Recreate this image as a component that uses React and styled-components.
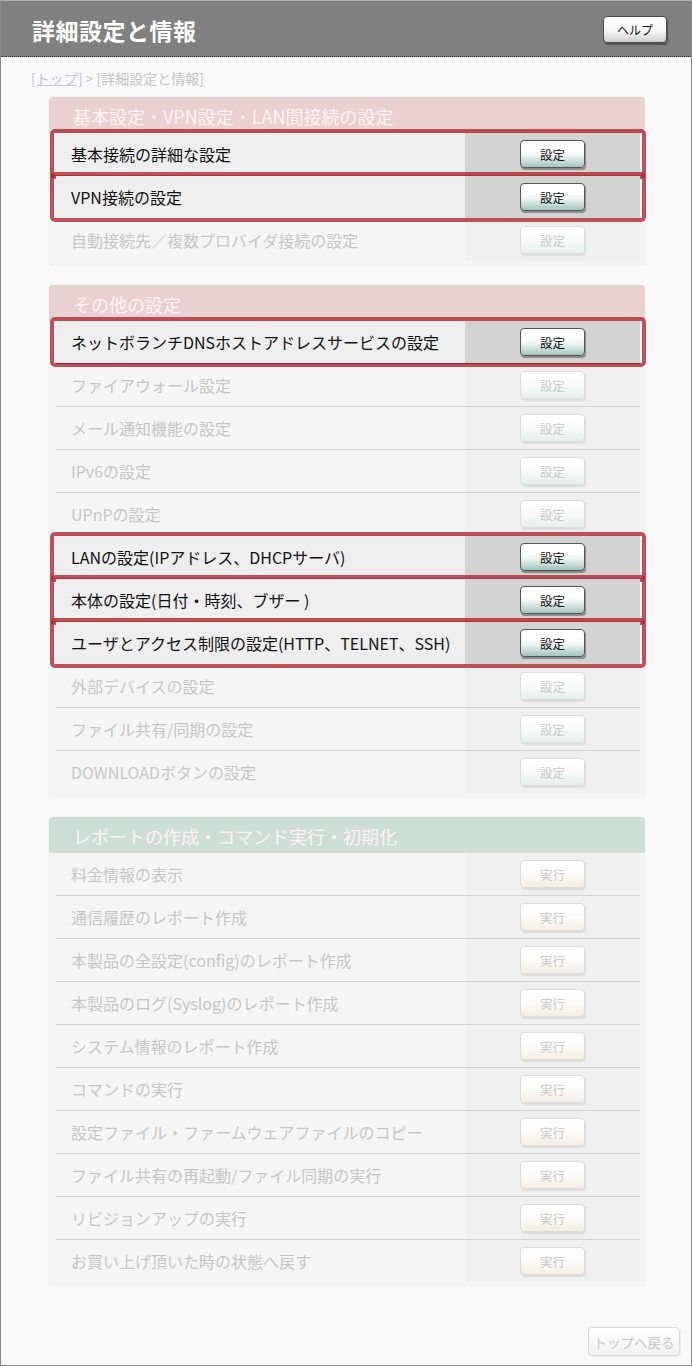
import React from 'react'
import styled, { createGlobalStyle, css } from 'styled-components'

const GlobalStyle = createGlobalStyle`
    html, body{
        margin: 0;
        padding: 0;
        background: #f9f9f9;
    }
    body{
        font-family: "Noto Sans CJK JP", "Noto Sans", sans-serif;
    }
    *{
        box-sizing: border-box;
    }
`

const sections = [
    {
        title: '基本設定・VPN設定・LAN間接続の設定',
        tone: 'pink',
        action: '設定',
        rows: [
            { label: '基本接続の詳細な設定', active: true },
            { label: 'VPN接続の設定', active: true },
            { label: '自動接続先／複数プロバイダ接続の設定' },
        ],
    },
    {
        title: 'その他の設定',
        tone: 'pink',
        action: '設定',
        rows: [
            { label: 'ネットボランチDNSホストアドレスサービスの設定', active: true, line: true },
            { label: 'ファイアウォール設定' },
            { label: 'メール通知機能の設定' },
            { label: 'IPv6の設定' },
            { label: 'UPnPの設定' },
            { label: 'LANの設定(IPアドレス、DHCPサーバ)', active: true },
            { label: '本体の設定(日付・時刻、ブザー )', active: true },
            { label: 'ユーザとアクセス制限の設定(HTTP、TELNET、SSH)', active: true },
            { label: '外部デバイスの設定' },
            { label: 'ファイル共有/同期の設定' },
            { label: 'DOWNLOADボタンの設定' },
        ],
    },
    {
        title: 'レポートの作成・コマンド実行・初期化',
        tone: 'green',
        action: '実行',
        rows: [
            { label: '料金情報の表示' },
            { label: '通信履歴のレポート作成' },
            { label: '本製品の全設定(config)のレポート作成' },
            { label: '本製品のログ(Syslog)のレポート作成' },
            { label: 'システム情報のレポート作成' },
            { label: 'コマンドの実行' },
            { label: '設定ファイル・ファームウェアファイルのコピー' },
            { label: 'ファイル共有の再起動/ファイル同期の実行' },
            { label: 'リビジョンアップの実行' },
            { label: 'お買い上げ頂いた時の状態へ戻す' },
        ],
    },
]

function App() {
    return (
        <>
            <GlobalStyle />
            <Frame>
                <TitleBar>
                    <Title>詳細設定と情報</Title>
                    <HelpButton>ヘルプ</HelpButton>
                </TitleBar>
                <Breadcrumb>
                    <a>[トップ]</a> &gt; [詳細設定と情報]
                </Breadcrumb>
                <Content>
                    {sections.map((section) => (
                        <Panel key={section.title}>
                            <PanelHeader $tone={section.tone}>{section.title}</PanelHeader>
                            {section.rows.map((row, index) => (
                                <Row
                                    key={row.label}
                                    $active={row.active}
                                    $line={row.line}
                                    $last={index === section.rows.length - 1}
                                >
                                    <Label>{row.label}</Label>
                                    <Cell $active={row.active}>
                                        <ActionButton $active={row.active} $kind={section.action === '実行' ? 'run' : 'set'}>
                                            {section.action}
                                        </ActionButton>
                                    </Cell>
                                </Row>
                            ))}
                        </Panel>
                    ))}
                </Content>
                <Footer>
                    <BackButton>トップへ戻る</BackButton>
                </Footer>
            </Frame>
        </>
    )
}

const Frame = styled.div`
    width: 692px;
    height: 1366px;
    border: 1px solid #8a8a8a;
    border-top-color: #b0b0b0;
    background: #f9f9f9;
    display: flex;
    flex-direction: column;
`

const TitleBar = styled.div`
    height: 56px;
    flex-shrink: 0;
    display: flex;
    align-items: center;
    justify-content: space-between;
    padding: 2px 24px 0 31px;
    background: #808080;
    border-bottom: 1px dotted #333;
`

const Title = styled.h1`
    margin: 0;
    color: #fff;
    font-size: 23px;
    font-weight: 700;
    letter-spacing: 0.5px;
`

const HelpButton = styled.button`
    width: 64px;
    height: 27px;
    padding: 0;
    font-family: inherit;
    font-size: 12px;
    color: #111;
    border: 1px solid #4a4a4a;
    border-radius: 4px;
    background: linear-gradient(#ffffff 0%, #f7f7f7 55%, #cfcfcf 100%);
    box-shadow: 1px 2px 1px rgba(0,0,0,0.35);
`

const Breadcrumb = styled.div`
    padding: 11px 0 0 30px;
    height: 40px;
    font-size: 14px;
    color: #c4c4c4;
    a{
        color: #c8bedd;
        text-decoration: underline;
    }
`

const Content = styled.div`
    display: flex;
    flex-direction: column;
    gap: 20px;
    padding: 0 46px 0 48px;
`

const Panel = styled.div`
    background: #f4f4f4;
    border-radius: 4px;
    padding: 0 5px 3px 7px;
    box-shadow: 0 0 2px rgba(0,0,0,0.08);
`

const PanelHeader = styled.div`
    height: 36px;
    margin: 0 -5px 0 -7px;
    padding: 6px 0 0 24px;
    border-radius: 4px 4px 0 0;
    font-size: 18px;
    color: #fbf3f3;
    background: ${({ $tone }) => ($tone === 'green' ? '#cddfd5' : '#e9d0d1')};
`

const Row = styled.div`
    position: relative;
    height: 43px;
    display: flex;
    align-items: stretch;
    background: #f5f5f5;
    color: #c6c6c6;
    border-bottom: 1px solid ${({ $last }) => ($last ? 'transparent' : '#d2d2d2')};
    ${({ $active, $line }) => $active && css`
        background: #eeeeee;
        color: #111;
        border-bottom-color: ${$line ? '#111' : 'transparent'};
        z-index: 1;
        &::after{
            content: '';
            position: absolute;
            inset: -4px -6px -4px -6px;
            border: 4px solid rgba(178, 40, 46, 0.8);
            border-radius: 5px;
            pointer-events: none;
        }
    `}
`

const Label = styled.div`
    flex: 1;
    display: flex;
    align-items: center;
    padding-left: 15px;
    font-size: 16px;
    white-space: nowrap;
`

const Cell = styled.div`
    width: 175px;
    display: flex;
    align-items: center;
    justify-content: center;
    background: ${({ $active }) => ($active ? '#d3d3d3' : '#efefef')};
`

const ActionButton = styled.button`
    width: 65px;
    height: 28px;
    padding: 0;
    font-family: inherit;
    font-size: 12.5px;
    border-radius: 4px;
    ${({ $active, $kind }) => $active ? css`
        color: #111;
        border: 1px solid #555;
        background: linear-gradient(#ffffff 0%, #ffffff 35%, #eef5f3 55%, #c9ddd9 78%, #a3c3bd 100%);
        box-shadow: 1px 2px 1px rgba(0,0,0,0.35);
    ` : css`
        color: #c9c9c9;
        border: 1px solid #dcdcdc;
        background: ${$kind === 'run'
            ? 'linear-gradient(#ffffff 0%, #fcfbf9 50%, #f4ede2 100%)'
            : 'linear-gradient(#ffffff 0%, #f8faf9 50%, #e4efec 100%)'};
        box-shadow: 1px 2px 1px rgba(0,0,0,0.08);
    `}
`

const Footer = styled.div`
    margin-top: auto;
    display: flex;
    justify-content: flex-end;
    padding: 0 11px 9px 0;
`

const BackButton = styled.button`
    width: 92px;
    height: 29px;
    padding: 0;
    font-family: inherit;
    font-size: 13.5px;
    color: #c8c8c8;
    border: 1px solid #dadada;
    border-radius: 4px;
    background: linear-gradient(#ffffff, #f1f1f1);
    box-shadow: 1px 1px 1px rgba(0,0,0,0.06);
`

export default App
